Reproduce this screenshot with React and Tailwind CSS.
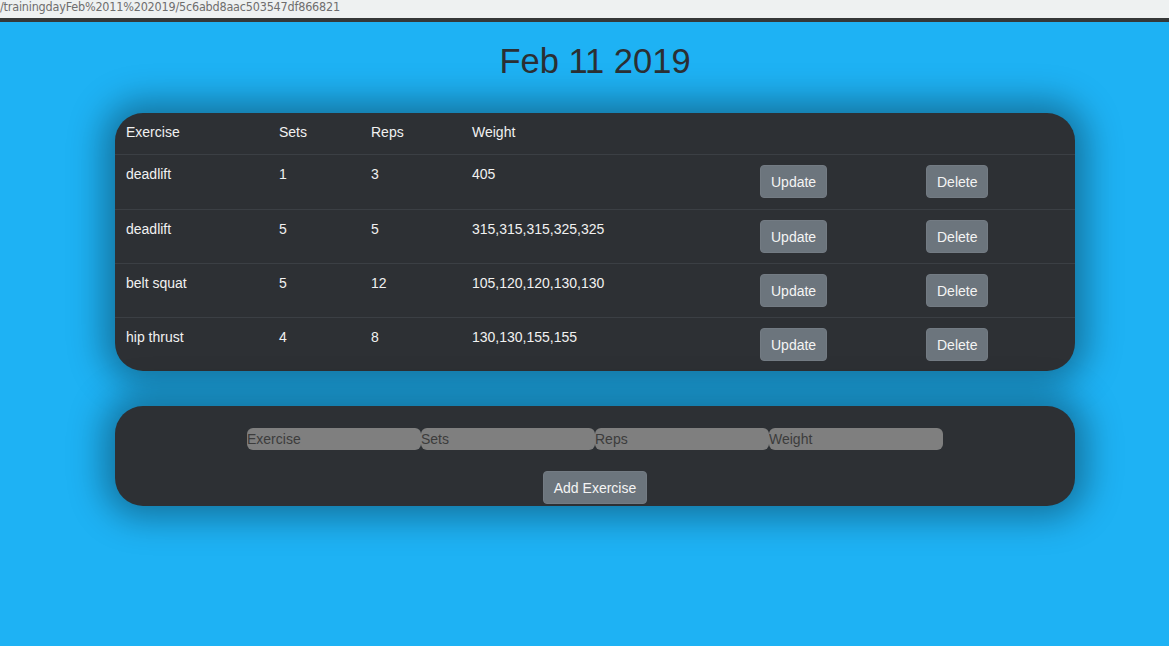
import React from "react";

const exercises = [
  { name: "deadlift", sets: 1, reps: 3, weight: "405" },
  { name: "deadlift", sets: 5, reps: 5, weight: "315,315,315,325,325" },
  { name: "belt squat", sets: 5, reps: 12, weight: "105,120,120,130,130" },
  { name: "hip thrust", sets: 4, reps: 8, weight: "130,130,155,155" },
];

const cols = "grid grid-cols-[153px_92px_101px_288px_166px_160px]";

function Btn({ children }) {
  return (
    <button className="h-[33px] px-[10px] rounded-[4px] bg-[#6c757d] border border-[#737b83] text-[14px] text-[#f4f4f4] leading-none">
      {children}
    </button>
  );
}

export default function App() {
  return (
    <div className="h-screen flex flex-col font-['Liberation_Sans',Arial,sans-serif]">
      <div className="h-[18px] bg-[#eef1f1] overflow-hidden">
        <p className="text-[12.5px] leading-[13px] text-[#6e6e6e] font-['DejaVu_Sans_Condensed','Liberation_Sans',sans-serif] tracking-[-0.2px]">
          /trainingdayFeb%2011%202019/5c6abd8aac503547df866821
        </p>
      </div>
      <div className="h-[4px] bg-[#353838]" />
      <main className="flex-1 bg-[#1eb2f4]">
        <div className="ml-[115px] w-[960px]">
          <h1 className="mt-[19px] text-center text-[34.5px] leading-[41px] text-[#2b2f33]">
            Feb 11 2019
          </h1>

          <section className="mt-[31px] rounded-[28px] bg-[#2d3034] text-[14px] text-[#f1f1f1] shadow-[0_0_34px_12px_rgba(0,0,0,0.35)] overflow-hidden">
            <div className={`${cols} h-[42px] items-start border-b border-[#3b3f44]`}>
              <div className="pt-[9px] pl-[11px] leading-[21px]">Exercise</div>
              <div className="pt-[9px] pl-[11px] leading-[21px]">Sets</div>
              <div className="pt-[9px] pl-[11px] leading-[21px]">Reps</div>
              <div className="pt-[9px] pl-[11px] leading-[21px]">Weight</div>
              <div />
              <div />
            </div>
            {exercises.map((ex, i) => (
              <div
                key={i}
                className={`${cols} h-[54px] items-start ${i > 0 ? "border-t border-[#3b3f44]" : ""}`}
              >
                <div className="p-[10px] pl-[11px] leading-[18px]">{ex.name}</div>
                <div className="p-[10px] pl-[11px] leading-[18px]">{ex.sets}</div>
                <div className="p-[10px] pl-[11px] leading-[18px]">{ex.reps}</div>
                <div className="p-[10px] pl-[11px] leading-[18px]">{ex.weight}</div>
                <div className="pt-[10px] pl-[11px]">
                  <Btn>Update</Btn>
                </div>
                <div className="pt-[10px] pl-[11px]">
                  <Btn>Delete</Btn>
                </div>
              </div>
            ))}
          </section>

          <section className="mt-[35px] h-[100px] rounded-[28px] bg-[#2d3034] shadow-[0_0_34px_12px_rgba(0,0,0,0.35)] flex flex-col items-center pt-[22px]">
            <div className="flex">
              {["Exercise", "Sets", "Reps", "Weight"].map((p) => (
                <input
                  key={p}
                  placeholder={p}
                  className="w-[174px] h-[22px] rounded-[6px] bg-[#7f7f7f] text-[14px] text-[#333] placeholder:text-[#3c3c3c] outline-none"
                />
              ))}
            </div>
            <div className="mt-[21px]">
              <Btn>Add Exercise</Btn>
            </div>
          </section>
        </div>
      </main>
    </div>
  );
}
